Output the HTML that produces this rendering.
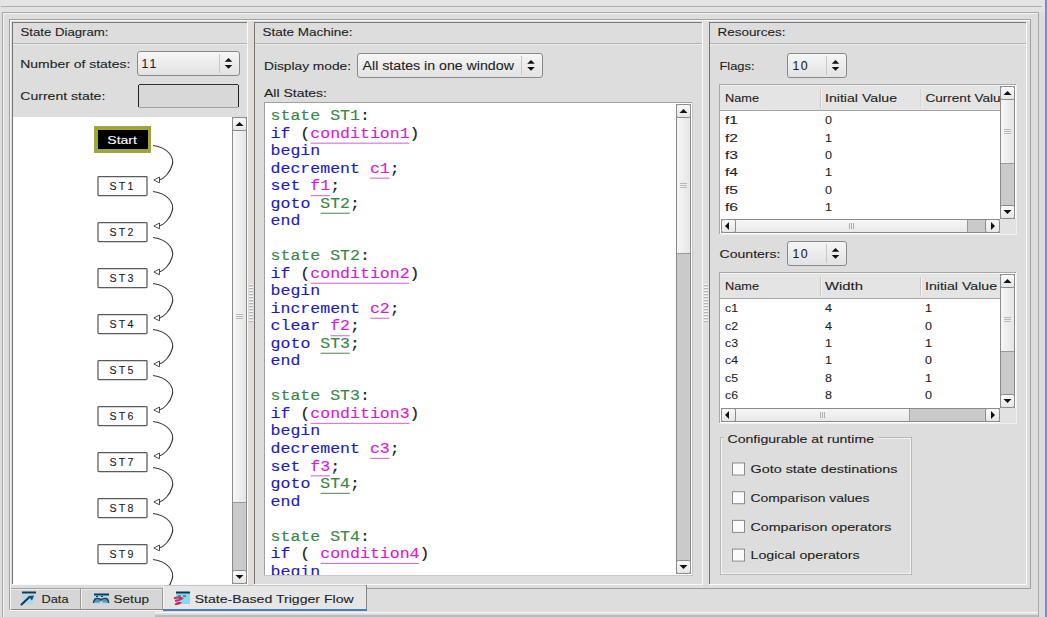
<!DOCTYPE html>
<html><head><meta charset="utf-8"><title>State-Based Trigger Flow</title>
<style>html,body{margin:0;padding:0;background:#dddddd;overflow:hidden;width:1047px;height:617px}svg{display:block}text{white-space:pre}</style>
</head><body><svg width="1047" height="617" viewBox="0 0 1047 617"><defs><linearGradient id="bg" x1="0" y1="0" x2="0" y2="1"><stop offset="0" stop-color="#fafafa"/><stop offset="1" stop-color="#e6e6e6"/></linearGradient><linearGradient id="tg" x1="0" y1="0" x2="0" y2="1"><stop offset="0" stop-color="#f6f6f6"/><stop offset="1" stop-color="#e8e8e8"/></linearGradient><linearGradient id="tgv" x1="0" y1="0" x2="1" y2="0"><stop offset="0" stop-color="#f6f6f6"/><stop offset="1" stop-color="#e6e6e6"/></linearGradient><linearGradient id="sg" x1="0" y1="0" x2="0" y2="1"><stop offset="0" stop-color="#f6f6f6"/><stop offset="1" stop-color="#e2e2e2"/></linearGradient></defs><rect x="0" y="0" width="1047" height="617" fill="#dddddd" /><rect x="0" y="0" width="1047" height="6" fill="#e4e4e4" /><rect x="1" y="6" width="1041" height="1" fill="#b0b0b0" /><rect x="0" y="7" width="1047" height="5" fill="#e2e2e2" /><rect x="2" y="12" width="1037" height="1" fill="#a8a8a8" /><rect x="2" y="12" width="1" height="606" fill="#a8a8a8" /><rect x="3" y="13" width="1035" height="1" fill="#f4f4f4" /><rect x="3" y="13" width="1" height="605" fill="#f4f4f4" /><rect x="1038" y="12" width="1" height="606" fill="#a8a8a8" /><rect x="1045" y="0" width="2" height="617" fill="#6494d6" /><rect x="9" y="19" width="1022" height="1" fill="#a0a0a0" /><rect x="9" y="19" width="1" height="570" fill="#a0a0a0" /><rect x="10" y="20" width="1020" height="1" fill="#f8f8f8" /><rect x="10" y="20" width="1" height="568" fill="#f8f8f8" /><rect x="1030" y="19" width="1" height="570" fill="#a0a0a0" /><rect x="9" y="588" width="1022" height="1" fill="#a0a0a0" /><rect x="12" y="22" width="236" height="1" fill="#7c7c7c" /><rect x="12" y="22" width="1" height="563" fill="#747474" /><rect x="247" y="22" width="1" height="563" fill="#fafafa" /><rect x="12" y="584" width="236" height="1" fill="#fafafa" /><rect x="13" y="43" width="234" height="1" fill="#b4b4b4" /><rect x="13" y="44" width="234" height="1" fill="#ececec" /><rect x="254" y="22" width="449" height="1" fill="#7c7c7c" /><rect x="254" y="22" width="1" height="563" fill="#747474" /><rect x="702" y="22" width="1" height="563" fill="#fafafa" /><rect x="254" y="584" width="449" height="1" fill="#fafafa" /><rect x="255" y="43" width="447" height="1" fill="#b4b4b4" /><rect x="255" y="44" width="447" height="1" fill="#ececec" /><rect x="709" y="22" width="318" height="1" fill="#7c7c7c" /><rect x="709" y="22" width="1" height="563" fill="#747474" /><rect x="1026" y="22" width="1" height="563" fill="#fafafa" /><rect x="709" y="584" width="318" height="1" fill="#fafafa" /><rect x="710" y="43" width="316" height="1" fill="#b4b4b4" /><rect x="710" y="44" width="316" height="1" fill="#ececec" /><rect x="248" y="22" width="6" height="563" fill="#e0dcd9" /><rect x="703" y="22" width="6" height="563" fill="#dfdfdf" /><rect x="249" y="284" width="4" height="1" fill="#f6f6f6" /><rect x="249" y="285" width="4" height="1" fill="#b4b4b4" /><rect x="704" y="284" width="4" height="1" fill="#f6f6f6" /><rect x="704" y="285" width="4" height="1" fill="#b4b4b4" /><rect x="249" y="287" width="4" height="1" fill="#f6f6f6" /><rect x="249" y="288" width="4" height="1" fill="#b4b4b4" /><rect x="704" y="287" width="4" height="1" fill="#f6f6f6" /><rect x="704" y="288" width="4" height="1" fill="#b4b4b4" /><rect x="249" y="290" width="4" height="1" fill="#f6f6f6" /><rect x="249" y="291" width="4" height="1" fill="#b4b4b4" /><rect x="704" y="290" width="4" height="1" fill="#f6f6f6" /><rect x="704" y="291" width="4" height="1" fill="#b4b4b4" /><rect x="249" y="293" width="4" height="1" fill="#f6f6f6" /><rect x="249" y="294" width="4" height="1" fill="#b4b4b4" /><rect x="704" y="293" width="4" height="1" fill="#f6f6f6" /><rect x="704" y="294" width="4" height="1" fill="#b4b4b4" /><rect x="249" y="296" width="4" height="1" fill="#f6f6f6" /><rect x="249" y="297" width="4" height="1" fill="#b4b4b4" /><rect x="704" y="296" width="4" height="1" fill="#f6f6f6" /><rect x="704" y="297" width="4" height="1" fill="#b4b4b4" /><rect x="249" y="299" width="4" height="1" fill="#f6f6f6" /><rect x="249" y="300" width="4" height="1" fill="#b4b4b4" /><rect x="704" y="299" width="4" height="1" fill="#f6f6f6" /><rect x="704" y="300" width="4" height="1" fill="#b4b4b4" /><rect x="249" y="302" width="4" height="1" fill="#f6f6f6" /><rect x="249" y="303" width="4" height="1" fill="#b4b4b4" /><rect x="704" y="302" width="4" height="1" fill="#f6f6f6" /><rect x="704" y="303" width="4" height="1" fill="#b4b4b4" /><rect x="249" y="305" width="4" height="1" fill="#f6f6f6" /><rect x="249" y="306" width="4" height="1" fill="#b4b4b4" /><rect x="704" y="305" width="4" height="1" fill="#f6f6f6" /><rect x="704" y="306" width="4" height="1" fill="#b4b4b4" /><rect x="249" y="308" width="4" height="1" fill="#f6f6f6" /><rect x="249" y="309" width="4" height="1" fill="#b4b4b4" /><rect x="704" y="308" width="4" height="1" fill="#f6f6f6" /><rect x="704" y="309" width="4" height="1" fill="#b4b4b4" /><rect x="249" y="311" width="4" height="1" fill="#f6f6f6" /><rect x="249" y="312" width="4" height="1" fill="#b4b4b4" /><rect x="704" y="311" width="4" height="1" fill="#f6f6f6" /><rect x="704" y="312" width="4" height="1" fill="#b4b4b4" /><rect x="249" y="314" width="4" height="1" fill="#f6f6f6" /><rect x="249" y="315" width="4" height="1" fill="#b4b4b4" /><rect x="704" y="314" width="4" height="1" fill="#f6f6f6" /><rect x="704" y="315" width="4" height="1" fill="#b4b4b4" /><rect x="249" y="317" width="4" height="1" fill="#f6f6f6" /><rect x="249" y="318" width="4" height="1" fill="#b4b4b4" /><rect x="704" y="317" width="4" height="1" fill="#f6f6f6" /><rect x="704" y="318" width="4" height="1" fill="#b4b4b4" /><rect x="249" y="320" width="4" height="1" fill="#f6f6f6" /><rect x="249" y="321" width="4" height="1" fill="#b4b4b4" /><rect x="704" y="320" width="4" height="1" fill="#f6f6f6" /><rect x="704" y="321" width="4" height="1" fill="#b4b4b4" /><text x="20.5" y="36.4" font-family="Liberation Sans" font-size="11" fill="#1e1e1e" stroke="#1e1e1e" stroke-width="0.1" textLength="88" lengthAdjust="spacingAndGlyphs" >State Diagram:</text><text x="262.5" y="36.4" font-family="Liberation Sans" font-size="11" fill="#1e1e1e" stroke="#1e1e1e" stroke-width="0.1" textLength="90" lengthAdjust="spacingAndGlyphs" >State Machine:</text><text x="717.5" y="36.4" font-family="Liberation Sans" font-size="11" fill="#1e1e1e" stroke="#1e1e1e" stroke-width="0.1" textLength="68" lengthAdjust="spacingAndGlyphs" >Resources:</text><text x="20.3" y="67.8" font-family="Liberation Sans" font-size="11" fill="#1e1e1e" stroke="#1e1e1e" stroke-width="0.1" textLength="110" lengthAdjust="spacingAndGlyphs" >Number of states:</text><rect x="137.5" y="51.5" width="102" height="24" rx="2.5" fill="url(#sg)" stroke="#8a8a8a"/><rect x="219" y="54" width="1" height="19" fill="#c8c8c8" /><path d="M224.7,61.8 L228.5,58 L232.3,61.8 Z M224.7,65 L228.5,68.8 L232.3,65 Z" fill="#111"/><text x="141.6" y="67.9" font-family="Liberation Sans" font-size="12.3" fill="#1e1e1e" stroke="#1e1e1e" stroke-width="0.1" textLength="14.8" lengthAdjust="spacing" >11</text><text x="20.3" y="99.8" font-family="Liberation Sans" font-size="11" fill="#1e1e1e" stroke="#1e1e1e" stroke-width="0.1" textLength="85" lengthAdjust="spacingAndGlyphs" >Current state:</text><rect x="138" y="84" width="101" height="24" fill="#d8d8d8" /><rect x="139" y="84" width="99" height="1" fill="#303030" /><rect x="138" y="85" width="1" height="22" fill="#202020" /><rect x="238" y="85" width="1" height="22" fill="#202020" /><rect x="139" y="107" width="99" height="1" fill="#a0a0a0" /><rect x="13" y="117" width="219" height="467" fill="#ffffff" /><rect x="232" y="117" width="15" height="467" fill="#cacaca" /><rect x="232" y="117" width="1" height="467" fill="#8a8a8a" /><rect x="246" y="117" width="1" height="467" fill="#8a8a8a" /><rect x="232.5" y="117.5" width="14" height="13" rx="2" fill="url(#bg)" stroke="#8a8a8a"/><path d="M235.5,126 L239.5,122 L243.5,126 Z" fill="#111"/><rect x="233" y="131" width="13" height="371" fill="url(#tgv)" /><rect x="233" y="502" width="13" height="1" fill="#9a9a9a" /><rect x="236" y="314" width="7" height="1" fill="#b8b8b8" /><rect x="236" y="316" width="7" height="1" fill="#b8b8b8" /><rect x="236" y="318" width="7" height="1" fill="#b8b8b8" /><rect x="232.5" y="570.5" width="14" height="13" rx="2" fill="url(#bg)" stroke="#8a8a8a"/><path d="M235.5,575 L239.5,579 L243.5,575 Z" fill="#111"/><rect x="94" y="126" width="57" height="27" fill="#a0a43c"/><rect x="98" y="130" width="50" height="19" fill="#000000" /><text x="107.3" y="144.2" font-family="Liberation Sans" font-size="11" fill="#ffffff" stroke="#ffffff" stroke-width="0.1" textLength="29.6" lengthAdjust="spacingAndGlyphs" >Start</text><rect x="98" y="176.5" width="49" height="19" rx="0.8" fill="#fff" stroke="#5a5a5a" stroke-width="1.25"/><text x="109.6" y="190.1" font-family="Liberation Sans" font-size="10.6" fill="#1a1a1a" stroke="#1a1a1a" stroke-width="0.1" textLength="23.8" lengthAdjust="spacing">ST1</text><rect x="98" y="222.5" width="49" height="19" rx="0.8" fill="#fff" stroke="#5a5a5a" stroke-width="1.25"/><text x="109.6" y="236.1" font-family="Liberation Sans" font-size="10.6" fill="#1a1a1a" stroke="#1a1a1a" stroke-width="0.1" textLength="23.8" lengthAdjust="spacing">ST2</text><rect x="98" y="268.5" width="49" height="19" rx="0.8" fill="#fff" stroke="#5a5a5a" stroke-width="1.25"/><text x="109.6" y="282.1" font-family="Liberation Sans" font-size="10.6" fill="#1a1a1a" stroke="#1a1a1a" stroke-width="0.1" textLength="23.8" lengthAdjust="spacing">ST3</text><rect x="98" y="314.5" width="49" height="19" rx="0.8" fill="#fff" stroke="#5a5a5a" stroke-width="1.25"/><text x="109.6" y="328.1" font-family="Liberation Sans" font-size="10.6" fill="#1a1a1a" stroke="#1a1a1a" stroke-width="0.1" textLength="23.8" lengthAdjust="spacing">ST4</text><rect x="98" y="360.5" width="49" height="19" rx="0.8" fill="#fff" stroke="#5a5a5a" stroke-width="1.25"/><text x="109.6" y="374.1" font-family="Liberation Sans" font-size="10.6" fill="#1a1a1a" stroke="#1a1a1a" stroke-width="0.1" textLength="23.8" lengthAdjust="spacing">ST5</text><rect x="98" y="406.5" width="49" height="19" rx="0.8" fill="#fff" stroke="#5a5a5a" stroke-width="1.25"/><text x="109.6" y="420.1" font-family="Liberation Sans" font-size="10.6" fill="#1a1a1a" stroke="#1a1a1a" stroke-width="0.1" textLength="23.8" lengthAdjust="spacing">ST6</text><rect x="98" y="452.5" width="49" height="19" rx="0.8" fill="#fff" stroke="#5a5a5a" stroke-width="1.25"/><text x="109.6" y="466.1" font-family="Liberation Sans" font-size="10.6" fill="#1a1a1a" stroke="#1a1a1a" stroke-width="0.1" textLength="23.8" lengthAdjust="spacing">ST7</text><rect x="98" y="498.5" width="49" height="19" rx="0.8" fill="#fff" stroke="#5a5a5a" stroke-width="1.25"/><text x="109.6" y="512.1" font-family="Liberation Sans" font-size="10.6" fill="#1a1a1a" stroke="#1a1a1a" stroke-width="0.1" textLength="23.8" lengthAdjust="spacing">ST8</text><rect x="98" y="544.5" width="49" height="19" rx="0.8" fill="#fff" stroke="#5a5a5a" stroke-width="1.25"/><text x="109.6" y="558.1" font-family="Liberation Sans" font-size="10.6" fill="#1a1a1a" stroke="#1a1a1a" stroke-width="0.1" textLength="23.8" lengthAdjust="spacing">ST9</text><path d="M153,145.5 C168,147.5 175,157.5 172,165.5 C170,172.5 164,179.0 159,180.0" fill="none" stroke="#3a3a3a" stroke-width="1.1"/><path d="M153.8,180.0 L159.5,177.0 L159.5,182.8 Z" fill="#fff" stroke="#3a3a3a" stroke-width="0.9"/><path d="M153,191.5 C168,193.5 175,203.5 172,211.5 C170,218.5 164,225.0 159,226.0" fill="none" stroke="#3a3a3a" stroke-width="1.1"/><path d="M153.8,226.0 L159.5,223.0 L159.5,228.8 Z" fill="#fff" stroke="#3a3a3a" stroke-width="0.9"/><path d="M153,237.5 C168,239.5 175,249.5 172,257.5 C170,264.5 164,271.0 159,272.0" fill="none" stroke="#3a3a3a" stroke-width="1.1"/><path d="M153.8,272.0 L159.5,269.0 L159.5,274.8 Z" fill="#fff" stroke="#3a3a3a" stroke-width="0.9"/><path d="M153,283.5 C168,285.5 175,295.5 172,303.5 C170,310.5 164,317.0 159,318.0" fill="none" stroke="#3a3a3a" stroke-width="1.1"/><path d="M153.8,318.0 L159.5,315.0 L159.5,320.8 Z" fill="#fff" stroke="#3a3a3a" stroke-width="0.9"/><path d="M153,329.5 C168,331.5 175,341.5 172,349.5 C170,356.5 164,363.0 159,364.0" fill="none" stroke="#3a3a3a" stroke-width="1.1"/><path d="M153.8,364.0 L159.5,361.0 L159.5,366.8 Z" fill="#fff" stroke="#3a3a3a" stroke-width="0.9"/><path d="M153,375.5 C168,377.5 175,387.5 172,395.5 C170,402.5 164,409.0 159,410.0" fill="none" stroke="#3a3a3a" stroke-width="1.1"/><path d="M153.8,410.0 L159.5,407.0 L159.5,412.8 Z" fill="#fff" stroke="#3a3a3a" stroke-width="0.9"/><path d="M153,421.5 C168,423.5 175,433.5 172,441.5 C170,448.5 164,455.0 159,456.0" fill="none" stroke="#3a3a3a" stroke-width="1.1"/><path d="M153.8,456.0 L159.5,453.0 L159.5,458.8 Z" fill="#fff" stroke="#3a3a3a" stroke-width="0.9"/><path d="M153,467.5 C168,469.5 175,479.5 172,487.5 C170,494.5 164,501.0 159,502.0" fill="none" stroke="#3a3a3a" stroke-width="1.1"/><path d="M153.8,502.0 L159.5,499.0 L159.5,504.8 Z" fill="#fff" stroke="#3a3a3a" stroke-width="0.9"/><path d="M153,513.5 C168,515.5 175,525.5 172,533.5 C170,540.5 164,547.0 159,548.0" fill="none" stroke="#3a3a3a" stroke-width="1.1"/><path d="M153.8,548.0 L159.5,545.0 L159.5,550.8 Z" fill="#fff" stroke="#3a3a3a" stroke-width="0.9"/><path d="M153,559.5 C168,561.5 175,571.5 172,579.5 C170,586.5 164,593.0 159,594.0" fill="none" stroke="#3a3a3a" stroke-width="1.1"/><path d="M153.8,594.0 L159.5,591.0 L159.5,596.8 Z" fill="#fff" stroke="#3a3a3a" stroke-width="0.9"/><text x="264" y="69.9" font-family="Liberation Sans" font-size="11" fill="#1e1e1e" stroke="#1e1e1e" stroke-width="0.1" textLength="87" lengthAdjust="spacingAndGlyphs" >Display mode:</text><rect x="357.5" y="53.5" width="185" height="24" rx="2.5" fill="url(#sg)" stroke="#8a8a8a"/><rect x="521" y="56" width="1" height="19" fill="#c8c8c8" /><path d="M527.2,63.8 L531.0,60 L534.8,63.8 Z M527.2,67 L531.0,70.8 L534.8,67 Z" fill="#111"/><text x="362.6" y="69.5" font-family="Liberation Sans" font-size="12.3" fill="#1e1e1e" stroke="#1e1e1e" stroke-width="0.1" textLength="151.3" lengthAdjust="spacingAndGlyphs" >All states in one window</text><text x="264" y="96.6" font-family="Liberation Sans" font-size="11" fill="#1e1e1e" stroke="#1e1e1e" stroke-width="0.1" textLength="63" lengthAdjust="spacingAndGlyphs" >All States:</text><rect x="265" y="103" width="427" height="472" fill="#ffffff" /><rect x="264" y="102" width="429" height="1" fill="#a0a0a0" /><rect x="264" y="102" width="1" height="474" fill="#a0a0a0" /><rect x="692" y="102" width="1" height="474" fill="#c8c8c8" /><rect x="264" y="575" width="429" height="1" fill="#c8c8c8" /><rect x="676" y="104" width="15" height="470" fill="#cacaca" /><rect x="676" y="104" width="1" height="470" fill="#8a8a8a" /><rect x="690" y="104" width="1" height="470" fill="#8a8a8a" /><rect x="676.5" y="104.5" width="14" height="13" rx="2" fill="url(#bg)" stroke="#8a8a8a"/><path d="M679.5,113 L683.5,109 L687.5,113 Z" fill="#111"/><rect x="677" y="118" width="13" height="135" fill="url(#tgv)" /><rect x="677" y="253" width="13" height="1" fill="#9a9a9a" /><rect x="680" y="183" width="7" height="1" fill="#b8b8b8" /><rect x="680" y="185" width="7" height="1" fill="#b8b8b8" /><rect x="680" y="187" width="7" height="1" fill="#b8b8b8" /><rect x="676.5" y="560.5" width="14" height="13" rx="2" fill="url(#bg)" stroke="#8a8a8a"/><path d="M679.5,565 L683.5,569 L687.5,565 Z" fill="#111"/><text transform="matrix(1,0,0,0.915,0,120.30)" x="270.60" y="0" font-family="Liberation Mono" font-size="16" fill="#3a8646" stroke="#3a8646" stroke-width="0.15" textLength="89.37" lengthAdjust="spacingAndGlyphs" xml:space="preserve">state ST1</text><text transform="matrix(1,0,0,0.915,0,120.30)" x="359.97" y="0" font-family="Liberation Mono" font-size="16" fill="#222" stroke="#222" stroke-width="0.15" textLength="9.93" lengthAdjust="spacingAndGlyphs" xml:space="preserve">:</text><text transform="matrix(1,0,0,0.915,0,137.81)" x="270.60" y="0" font-family="Liberation Mono" font-size="16" fill="#1a1ac4" stroke="#1a1ac4" stroke-width="0.15" textLength="19.86" lengthAdjust="spacingAndGlyphs" xml:space="preserve">if</text><text transform="matrix(1,0,0,0.915,0,137.81)" x="290.46" y="0" font-family="Liberation Mono" font-size="16" fill="#222" stroke="#222" stroke-width="0.15" textLength="19.86" lengthAdjust="spacingAndGlyphs" xml:space="preserve"> (</text><text transform="matrix(1,0,0,0.915,0,137.81)" x="310.32" y="0" font-family="Liberation Mono" font-size="16" fill="#d81ad4" stroke="#d81ad4" stroke-width="0.15" textLength="99.30" lengthAdjust="spacingAndGlyphs" xml:space="preserve">condition1</text><rect x="310.6" y="142.6" width="98.7" height="1.1" fill="#d070d0" /><text transform="matrix(1,0,0,0.915,0,137.81)" x="409.62" y="0" font-family="Liberation Mono" font-size="16" fill="#222" stroke="#222" stroke-width="0.15" textLength="9.93" lengthAdjust="spacingAndGlyphs" xml:space="preserve">)</text><text transform="matrix(1,0,0,0.915,0,155.32)" x="270.60" y="0" font-family="Liberation Mono" font-size="16" fill="#1a1ac4" stroke="#1a1ac4" stroke-width="0.15" textLength="49.65" lengthAdjust="spacingAndGlyphs" xml:space="preserve">begin</text><text transform="matrix(1,0,0,0.915,0,172.83)" x="270.60" y="0" font-family="Liberation Mono" font-size="16" fill="#1a1ac4" stroke="#1a1ac4" stroke-width="0.15" textLength="89.37" lengthAdjust="spacingAndGlyphs" xml:space="preserve">decrement</text><text transform="matrix(1,0,0,0.915,0,172.83)" x="359.97" y="0" font-family="Liberation Mono" font-size="16" fill="#222" stroke="#222" stroke-width="0.15" textLength="9.93" lengthAdjust="spacingAndGlyphs" xml:space="preserve"> </text><text transform="matrix(1,0,0,0.915,0,172.83)" x="369.90" y="0" font-family="Liberation Mono" font-size="16" fill="#d81ad4" stroke="#d81ad4" stroke-width="0.15" textLength="19.86" lengthAdjust="spacingAndGlyphs" xml:space="preserve">c1</text><rect x="370.2" y="177.6" width="19.3" height="1.1" fill="#d070d0" /><text transform="matrix(1,0,0,0.915,0,172.83)" x="389.76" y="0" font-family="Liberation Mono" font-size="16" fill="#222" stroke="#222" stroke-width="0.15" textLength="9.93" lengthAdjust="spacingAndGlyphs" xml:space="preserve">;</text><text transform="matrix(1,0,0,0.915,0,190.34)" x="270.60" y="0" font-family="Liberation Mono" font-size="16" fill="#1a1ac4" stroke="#1a1ac4" stroke-width="0.15" textLength="29.79" lengthAdjust="spacingAndGlyphs" xml:space="preserve">set</text><text transform="matrix(1,0,0,0.915,0,190.34)" x="300.39" y="0" font-family="Liberation Mono" font-size="16" fill="#222" stroke="#222" stroke-width="0.15" textLength="9.93" lengthAdjust="spacingAndGlyphs" xml:space="preserve"> </text><text transform="matrix(1,0,0,0.915,0,190.34)" x="310.32" y="0" font-family="Liberation Mono" font-size="16" fill="#d81ad4" stroke="#d81ad4" stroke-width="0.15" textLength="19.86" lengthAdjust="spacingAndGlyphs" xml:space="preserve">f1</text><rect x="310.6" y="195.1" width="19.3" height="1.1" fill="#d070d0" /><text transform="matrix(1,0,0,0.915,0,190.34)" x="330.18" y="0" font-family="Liberation Mono" font-size="16" fill="#222" stroke="#222" stroke-width="0.15" textLength="9.93" lengthAdjust="spacingAndGlyphs" xml:space="preserve">;</text><text transform="matrix(1,0,0,0.915,0,207.85)" x="270.60" y="0" font-family="Liberation Mono" font-size="16" fill="#1a1ac4" stroke="#1a1ac4" stroke-width="0.15" textLength="39.72" lengthAdjust="spacingAndGlyphs" xml:space="preserve">goto</text><text transform="matrix(1,0,0,0.915,0,207.85)" x="310.32" y="0" font-family="Liberation Mono" font-size="16" fill="#222" stroke="#222" stroke-width="0.15" textLength="9.93" lengthAdjust="spacingAndGlyphs" xml:space="preserve"> </text><text transform="matrix(1,0,0,0.915,0,207.85)" x="320.25" y="0" font-family="Liberation Mono" font-size="16" fill="#3a8646" stroke="#3a8646" stroke-width="0.15" textLength="29.79" lengthAdjust="spacingAndGlyphs" xml:space="preserve">ST2</text><rect x="320.6" y="212.7" width="29.2" height="1.1" fill="#5e8e62" /><text transform="matrix(1,0,0,0.915,0,207.85)" x="350.04" y="0" font-family="Liberation Mono" font-size="16" fill="#222" stroke="#222" stroke-width="0.15" textLength="9.93" lengthAdjust="spacingAndGlyphs" xml:space="preserve">;</text><text transform="matrix(1,0,0,0.915,0,225.36)" x="270.60" y="0" font-family="Liberation Mono" font-size="16" fill="#1a1ac4" stroke="#1a1ac4" stroke-width="0.15" textLength="29.79" lengthAdjust="spacingAndGlyphs" xml:space="preserve">end</text><text transform="matrix(1,0,0,0.915,0,260.38)" x="270.60" y="0" font-family="Liberation Mono" font-size="16" fill="#3a8646" stroke="#3a8646" stroke-width="0.15" textLength="89.37" lengthAdjust="spacingAndGlyphs" xml:space="preserve">state ST2</text><text transform="matrix(1,0,0,0.915,0,260.38)" x="359.97" y="0" font-family="Liberation Mono" font-size="16" fill="#222" stroke="#222" stroke-width="0.15" textLength="9.93" lengthAdjust="spacingAndGlyphs" xml:space="preserve">:</text><text transform="matrix(1,0,0,0.915,0,277.89)" x="270.60" y="0" font-family="Liberation Mono" font-size="16" fill="#1a1ac4" stroke="#1a1ac4" stroke-width="0.15" textLength="19.86" lengthAdjust="spacingAndGlyphs" xml:space="preserve">if</text><text transform="matrix(1,0,0,0.915,0,277.89)" x="290.46" y="0" font-family="Liberation Mono" font-size="16" fill="#222" stroke="#222" stroke-width="0.15" textLength="19.86" lengthAdjust="spacingAndGlyphs" xml:space="preserve"> (</text><text transform="matrix(1,0,0,0.915,0,277.89)" x="310.32" y="0" font-family="Liberation Mono" font-size="16" fill="#d81ad4" stroke="#d81ad4" stroke-width="0.15" textLength="99.30" lengthAdjust="spacingAndGlyphs" xml:space="preserve">condition2</text><rect x="310.6" y="282.7" width="98.7" height="1.1" fill="#d070d0" /><text transform="matrix(1,0,0,0.915,0,277.89)" x="409.62" y="0" font-family="Liberation Mono" font-size="16" fill="#222" stroke="#222" stroke-width="0.15" textLength="9.93" lengthAdjust="spacingAndGlyphs" xml:space="preserve">)</text><text transform="matrix(1,0,0,0.915,0,295.40)" x="270.60" y="0" font-family="Liberation Mono" font-size="16" fill="#1a1ac4" stroke="#1a1ac4" stroke-width="0.15" textLength="49.65" lengthAdjust="spacingAndGlyphs" xml:space="preserve">begin</text><text transform="matrix(1,0,0,0.915,0,312.91)" x="270.60" y="0" font-family="Liberation Mono" font-size="16" fill="#1a1ac4" stroke="#1a1ac4" stroke-width="0.15" textLength="89.37" lengthAdjust="spacingAndGlyphs" xml:space="preserve">increment</text><text transform="matrix(1,0,0,0.915,0,312.91)" x="359.97" y="0" font-family="Liberation Mono" font-size="16" fill="#222" stroke="#222" stroke-width="0.15" textLength="9.93" lengthAdjust="spacingAndGlyphs" xml:space="preserve"> </text><text transform="matrix(1,0,0,0.915,0,312.91)" x="369.90" y="0" font-family="Liberation Mono" font-size="16" fill="#d81ad4" stroke="#d81ad4" stroke-width="0.15" textLength="19.86" lengthAdjust="spacingAndGlyphs" xml:space="preserve">c2</text><rect x="370.2" y="317.7" width="19.3" height="1.1" fill="#d070d0" /><text transform="matrix(1,0,0,0.915,0,312.91)" x="389.76" y="0" font-family="Liberation Mono" font-size="16" fill="#222" stroke="#222" stroke-width="0.15" textLength="9.93" lengthAdjust="spacingAndGlyphs" xml:space="preserve">;</text><text transform="matrix(1,0,0,0.915,0,330.42)" x="270.60" y="0" font-family="Liberation Mono" font-size="16" fill="#1a1ac4" stroke="#1a1ac4" stroke-width="0.15" textLength="49.65" lengthAdjust="spacingAndGlyphs" xml:space="preserve">clear</text><text transform="matrix(1,0,0,0.915,0,330.42)" x="320.25" y="0" font-family="Liberation Mono" font-size="16" fill="#222" stroke="#222" stroke-width="0.15" textLength="9.93" lengthAdjust="spacingAndGlyphs" xml:space="preserve"> </text><text transform="matrix(1,0,0,0.915,0,330.42)" x="330.18" y="0" font-family="Liberation Mono" font-size="16" fill="#d81ad4" stroke="#d81ad4" stroke-width="0.15" textLength="19.86" lengthAdjust="spacingAndGlyphs" xml:space="preserve">f2</text><rect x="330.5" y="335.2" width="19.3" height="1.1" fill="#d070d0" /><text transform="matrix(1,0,0,0.915,0,330.42)" x="350.04" y="0" font-family="Liberation Mono" font-size="16" fill="#222" stroke="#222" stroke-width="0.15" textLength="9.93" lengthAdjust="spacingAndGlyphs" xml:space="preserve">;</text><text transform="matrix(1,0,0,0.915,0,347.93)" x="270.60" y="0" font-family="Liberation Mono" font-size="16" fill="#1a1ac4" stroke="#1a1ac4" stroke-width="0.15" textLength="39.72" lengthAdjust="spacingAndGlyphs" xml:space="preserve">goto</text><text transform="matrix(1,0,0,0.915,0,347.93)" x="310.32" y="0" font-family="Liberation Mono" font-size="16" fill="#222" stroke="#222" stroke-width="0.15" textLength="9.93" lengthAdjust="spacingAndGlyphs" xml:space="preserve"> </text><text transform="matrix(1,0,0,0.915,0,347.93)" x="320.25" y="0" font-family="Liberation Mono" font-size="16" fill="#3a8646" stroke="#3a8646" stroke-width="0.15" textLength="29.79" lengthAdjust="spacingAndGlyphs" xml:space="preserve">ST3</text><rect x="320.6" y="352.7" width="29.2" height="1.1" fill="#5e8e62" /><text transform="matrix(1,0,0,0.915,0,347.93)" x="350.04" y="0" font-family="Liberation Mono" font-size="16" fill="#222" stroke="#222" stroke-width="0.15" textLength="9.93" lengthAdjust="spacingAndGlyphs" xml:space="preserve">;</text><text transform="matrix(1,0,0,0.915,0,365.44)" x="270.60" y="0" font-family="Liberation Mono" font-size="16" fill="#1a1ac4" stroke="#1a1ac4" stroke-width="0.15" textLength="29.79" lengthAdjust="spacingAndGlyphs" xml:space="preserve">end</text><text transform="matrix(1,0,0,0.915,0,400.46)" x="270.60" y="0" font-family="Liberation Mono" font-size="16" fill="#3a8646" stroke="#3a8646" stroke-width="0.15" textLength="89.37" lengthAdjust="spacingAndGlyphs" xml:space="preserve">state ST3</text><text transform="matrix(1,0,0,0.915,0,400.46)" x="359.97" y="0" font-family="Liberation Mono" font-size="16" fill="#222" stroke="#222" stroke-width="0.15" textLength="9.93" lengthAdjust="spacingAndGlyphs" xml:space="preserve">:</text><text transform="matrix(1,0,0,0.915,0,417.97)" x="270.60" y="0" font-family="Liberation Mono" font-size="16" fill="#1a1ac4" stroke="#1a1ac4" stroke-width="0.15" textLength="19.86" lengthAdjust="spacingAndGlyphs" xml:space="preserve">if</text><text transform="matrix(1,0,0,0.915,0,417.97)" x="290.46" y="0" font-family="Liberation Mono" font-size="16" fill="#222" stroke="#222" stroke-width="0.15" textLength="19.86" lengthAdjust="spacingAndGlyphs" xml:space="preserve"> (</text><text transform="matrix(1,0,0,0.915,0,417.97)" x="310.32" y="0" font-family="Liberation Mono" font-size="16" fill="#d81ad4" stroke="#d81ad4" stroke-width="0.15" textLength="99.30" lengthAdjust="spacingAndGlyphs" xml:space="preserve">condition3</text><rect x="310.6" y="422.8" width="98.7" height="1.1" fill="#d070d0" /><text transform="matrix(1,0,0,0.915,0,417.97)" x="409.62" y="0" font-family="Liberation Mono" font-size="16" fill="#222" stroke="#222" stroke-width="0.15" textLength="9.93" lengthAdjust="spacingAndGlyphs" xml:space="preserve">)</text><text transform="matrix(1,0,0,0.915,0,435.48)" x="270.60" y="0" font-family="Liberation Mono" font-size="16" fill="#1a1ac4" stroke="#1a1ac4" stroke-width="0.15" textLength="49.65" lengthAdjust="spacingAndGlyphs" xml:space="preserve">begin</text><text transform="matrix(1,0,0,0.915,0,452.99)" x="270.60" y="0" font-family="Liberation Mono" font-size="16" fill="#1a1ac4" stroke="#1a1ac4" stroke-width="0.15" textLength="89.37" lengthAdjust="spacingAndGlyphs" xml:space="preserve">decrement</text><text transform="matrix(1,0,0,0.915,0,452.99)" x="359.97" y="0" font-family="Liberation Mono" font-size="16" fill="#222" stroke="#222" stroke-width="0.15" textLength="9.93" lengthAdjust="spacingAndGlyphs" xml:space="preserve"> </text><text transform="matrix(1,0,0,0.915,0,452.99)" x="369.90" y="0" font-family="Liberation Mono" font-size="16" fill="#d81ad4" stroke="#d81ad4" stroke-width="0.15" textLength="19.86" lengthAdjust="spacingAndGlyphs" xml:space="preserve">c3</text><rect x="370.2" y="457.8" width="19.3" height="1.1" fill="#d070d0" /><text transform="matrix(1,0,0,0.915,0,452.99)" x="389.76" y="0" font-family="Liberation Mono" font-size="16" fill="#222" stroke="#222" stroke-width="0.15" textLength="9.93" lengthAdjust="spacingAndGlyphs" xml:space="preserve">;</text><text transform="matrix(1,0,0,0.915,0,470.50)" x="270.60" y="0" font-family="Liberation Mono" font-size="16" fill="#1a1ac4" stroke="#1a1ac4" stroke-width="0.15" textLength="29.79" lengthAdjust="spacingAndGlyphs" xml:space="preserve">set</text><text transform="matrix(1,0,0,0.915,0,470.50)" x="300.39" y="0" font-family="Liberation Mono" font-size="16" fill="#222" stroke="#222" stroke-width="0.15" textLength="9.93" lengthAdjust="spacingAndGlyphs" xml:space="preserve"> </text><text transform="matrix(1,0,0,0.915,0,470.50)" x="310.32" y="0" font-family="Liberation Mono" font-size="16" fill="#d81ad4" stroke="#d81ad4" stroke-width="0.15" textLength="19.86" lengthAdjust="spacingAndGlyphs" xml:space="preserve">f3</text><rect x="310.6" y="475.3" width="19.3" height="1.1" fill="#d070d0" /><text transform="matrix(1,0,0,0.915,0,470.50)" x="330.18" y="0" font-family="Liberation Mono" font-size="16" fill="#222" stroke="#222" stroke-width="0.15" textLength="9.93" lengthAdjust="spacingAndGlyphs" xml:space="preserve">;</text><text transform="matrix(1,0,0,0.915,0,488.01)" x="270.60" y="0" font-family="Liberation Mono" font-size="16" fill="#1a1ac4" stroke="#1a1ac4" stroke-width="0.15" textLength="39.72" lengthAdjust="spacingAndGlyphs" xml:space="preserve">goto</text><text transform="matrix(1,0,0,0.915,0,488.01)" x="310.32" y="0" font-family="Liberation Mono" font-size="16" fill="#222" stroke="#222" stroke-width="0.15" textLength="9.93" lengthAdjust="spacingAndGlyphs" xml:space="preserve"> </text><text transform="matrix(1,0,0,0.915,0,488.01)" x="320.25" y="0" font-family="Liberation Mono" font-size="16" fill="#3a8646" stroke="#3a8646" stroke-width="0.15" textLength="29.79" lengthAdjust="spacingAndGlyphs" xml:space="preserve">ST4</text><rect x="320.6" y="492.8" width="29.2" height="1.1" fill="#5e8e62" /><text transform="matrix(1,0,0,0.915,0,488.01)" x="350.04" y="0" font-family="Liberation Mono" font-size="16" fill="#222" stroke="#222" stroke-width="0.15" textLength="9.93" lengthAdjust="spacingAndGlyphs" xml:space="preserve">;</text><text transform="matrix(1,0,0,0.915,0,505.52)" x="270.60" y="0" font-family="Liberation Mono" font-size="16" fill="#1a1ac4" stroke="#1a1ac4" stroke-width="0.15" textLength="29.79" lengthAdjust="spacingAndGlyphs" xml:space="preserve">end</text><text transform="matrix(1,0,0,0.915,0,540.54)" x="270.60" y="0" font-family="Liberation Mono" font-size="16" fill="#3a8646" stroke="#3a8646" stroke-width="0.15" textLength="89.37" lengthAdjust="spacingAndGlyphs" xml:space="preserve">state ST4</text><text transform="matrix(1,0,0,0.915,0,540.54)" x="359.97" y="0" font-family="Liberation Mono" font-size="16" fill="#222" stroke="#222" stroke-width="0.15" textLength="9.93" lengthAdjust="spacingAndGlyphs" xml:space="preserve">:</text><text transform="matrix(1,0,0,0.915,0,558.05)" x="270.60" y="0" font-family="Liberation Mono" font-size="16" fill="#1a1ac4" stroke="#1a1ac4" stroke-width="0.15" textLength="19.86" lengthAdjust="spacingAndGlyphs" xml:space="preserve">if</text><text transform="matrix(1,0,0,0.915,0,558.05)" x="290.46" y="0" font-family="Liberation Mono" font-size="16" fill="#222" stroke="#222" stroke-width="0.15" textLength="29.79" lengthAdjust="spacingAndGlyphs" xml:space="preserve"> ( </text><text transform="matrix(1,0,0,0.915,0,558.05)" x="320.25" y="0" font-family="Liberation Mono" font-size="16" fill="#d81ad4" stroke="#d81ad4" stroke-width="0.15" textLength="99.30" lengthAdjust="spacingAndGlyphs" xml:space="preserve">condition4</text><rect x="320.6" y="562.9" width="98.7" height="1.1" fill="#d070d0" /><text transform="matrix(1,0,0,0.915,0,558.05)" x="419.55" y="0" font-family="Liberation Mono" font-size="16" fill="#222" stroke="#222" stroke-width="0.15" textLength="9.93" lengthAdjust="spacingAndGlyphs" xml:space="preserve">)</text><text transform="matrix(1,0,0,0.915,0,575.56)" x="270.60" y="0" font-family="Liberation Mono" font-size="16" fill="#1a1ac4" stroke="#1a1ac4" stroke-width="0.15" textLength="49.65" lengthAdjust="spacingAndGlyphs" xml:space="preserve">begin</text><rect x="255" y="575" width="447" height="9" fill="#dddddd" /><rect x="264" y="575" width="429" height="1" fill="#c8c8c8" /><text x="719.5" y="69.5" font-family="Liberation Sans" font-size="11" fill="#1e1e1e" stroke="#1e1e1e" stroke-width="0.1" textLength="35" lengthAdjust="spacingAndGlyphs" >Flags:</text><rect x="787.5" y="53.5" width="59" height="24" rx="2.5" fill="url(#sg)" stroke="#8a8a8a"/><rect x="826" y="56" width="1" height="19" fill="#c8c8c8" /><path d="M831.7,63.8 L835.5,60 L839.3,63.8 Z M831.7,67 L835.5,70.8 L839.3,67 Z" fill="#111"/><text x="792.5" y="69.5" font-family="Liberation Sans" font-size="12.3" fill="#1e1e1e" stroke="#1e1e1e" stroke-width="0.1" textLength="15" lengthAdjust="spacing" >10</text><rect x="720" y="85" width="296" height="149" fill="#ffffff" /><rect x="720" y="85" width="280" height="25" fill="#e4e4e4" /><rect x="720" y="85" width="281" height="1" fill="#f2f2f2" /><rect x="719" y="84" width="298" height="1" fill="#a8a8a8" /><rect x="719" y="84" width="1" height="151" fill="#a8a8a8" /><rect x="1016" y="84" width="1" height="151" fill="#f0f0f0" /><rect x="719" y="234" width="298" height="1" fill="#f0f0f0" /><rect x="720" y="110" width="281" height="1" fill="#a8a8a8" /><rect x="820" y="89" width="1" height="19" fill="#c8c8c8" /><rect x="821" y="89" width="1" height="19" fill="#f4f4f4" /><rect x="920.5" y="89" width="1" height="19" fill="#c8c8c8" /><rect x="921.5" y="89" width="1" height="19" fill="#f4f4f4" /><text x="725" y="102.3" font-family="Liberation Sans" font-size="11" fill="#1e1e1e" stroke="#1e1e1e" stroke-width="0.1" textLength="34" lengthAdjust="spacingAndGlyphs" >Name</text><text x="825" y="102.3" font-family="Liberation Sans" font-size="11" fill="#1e1e1e" stroke="#1e1e1e" stroke-width="0.1" textLength="72" lengthAdjust="spacingAndGlyphs" >Initial Value</text><text x="925.5" y="102.3" font-family="Liberation Sans" font-size="11" fill="#1e1e1e" stroke="#1e1e1e" stroke-width="0.1" textLength="75" lengthAdjust="spacingAndGlyphs" >Current Valu</text><text x="725" y="124.2" font-family="Liberation Sans" font-size="11" fill="#1e1e1e" stroke="#1e1e1e" stroke-width="0.1" textLength="13" lengthAdjust="spacingAndGlyphs" >f1</text><text x="825" y="124.2" font-family="Liberation Sans" font-size="11" fill="#1e1e1e" stroke="#1e1e1e" stroke-width="0.1" textLength="7" lengthAdjust="spacingAndGlyphs" >0</text><text x="725" y="141.58" font-family="Liberation Sans" font-size="11" fill="#1e1e1e" stroke="#1e1e1e" stroke-width="0.1" textLength="13" lengthAdjust="spacingAndGlyphs" >f2</text><text x="825" y="141.58" font-family="Liberation Sans" font-size="11" fill="#1e1e1e" stroke="#1e1e1e" stroke-width="0.1" textLength="7" lengthAdjust="spacingAndGlyphs" >1</text><text x="725" y="158.96" font-family="Liberation Sans" font-size="11" fill="#1e1e1e" stroke="#1e1e1e" stroke-width="0.1" textLength="13" lengthAdjust="spacingAndGlyphs" >f3</text><text x="825" y="158.96" font-family="Liberation Sans" font-size="11" fill="#1e1e1e" stroke="#1e1e1e" stroke-width="0.1" textLength="7" lengthAdjust="spacingAndGlyphs" >0</text><text x="725" y="176.34" font-family="Liberation Sans" font-size="11" fill="#1e1e1e" stroke="#1e1e1e" stroke-width="0.1" textLength="13" lengthAdjust="spacingAndGlyphs" >f4</text><text x="825" y="176.34" font-family="Liberation Sans" font-size="11" fill="#1e1e1e" stroke="#1e1e1e" stroke-width="0.1" textLength="7" lengthAdjust="spacingAndGlyphs" >1</text><text x="725" y="193.72" font-family="Liberation Sans" font-size="11" fill="#1e1e1e" stroke="#1e1e1e" stroke-width="0.1" textLength="13" lengthAdjust="spacingAndGlyphs" >f5</text><text x="825" y="193.72" font-family="Liberation Sans" font-size="11" fill="#1e1e1e" stroke="#1e1e1e" stroke-width="0.1" textLength="7" lengthAdjust="spacingAndGlyphs" >0</text><text x="725" y="211.1" font-family="Liberation Sans" font-size="11" fill="#1e1e1e" stroke="#1e1e1e" stroke-width="0.1" textLength="13" lengthAdjust="spacingAndGlyphs" >f6</text><text x="825" y="211.1" font-family="Liberation Sans" font-size="11" fill="#1e1e1e" stroke="#1e1e1e" stroke-width="0.1" textLength="7" lengthAdjust="spacingAndGlyphs" >1</text><rect x="1000" y="86" width="15" height="133" fill="#cacaca" /><rect x="1000" y="86" width="1" height="133" fill="#8a8a8a" /><rect x="1014" y="86" width="1" height="133" fill="#8a8a8a" /><rect x="1000.5" y="86.5" width="14" height="13" rx="2" fill="url(#bg)" stroke="#8a8a8a"/><path d="M1003.5,95 L1007.5,91 L1011.5,95 Z" fill="#111"/><rect x="1001" y="100" width="13" height="63" fill="url(#tgv)" /><rect x="1001" y="163" width="13" height="1" fill="#9a9a9a" /><rect x="1004" y="129" width="7" height="1" fill="#b8b8b8" /><rect x="1004" y="131" width="7" height="1" fill="#b8b8b8" /><rect x="1004" y="133" width="7" height="1" fill="#b8b8b8" /><rect x="1000.5" y="205.5" width="14" height="13" rx="2" fill="url(#bg)" stroke="#8a8a8a"/><path d="M1003.5,210 L1007.5,214 L1011.5,210 Z" fill="#111"/><rect x="721" y="219" width="279" height="14" fill="#cacaca" /><rect x="721" y="219" width="279" height="1" fill="#8a8a8a" /><rect x="721" y="232" width="279" height="1" fill="#8a8a8a" /><rect x="721.5" y="219.5" width="14" height="13" rx="2" fill="url(#bg)" stroke="#8a8a8a"/><path d="M725,226 L729,222 L729,230 Z" fill="#111"/><rect x="736" y="220" width="231" height="12" fill="url(#tg)" /><rect x="967" y="220" width="1" height="12" fill="#9a9a9a" /><rect x="849" y="223" width="1" height="6" fill="#b0b0b0" /><rect x="851" y="223" width="1" height="6" fill="#b0b0b0" /><rect x="853" y="223" width="1" height="6" fill="#b0b0b0" /><rect x="1000" y="219" width="16" height="15" fill="#e2e2e2" /><rect x="985.5" y="219.5" width="14" height="13" rx="2" fill="url(#bg)" stroke="#8a8a8a"/><path d="M995,226 L991,222 L991,230 Z" fill="#111"/><text x="719.5" y="257.9" font-family="Liberation Sans" font-size="11" fill="#1e1e1e" stroke="#1e1e1e" stroke-width="0.1" textLength="61" lengthAdjust="spacingAndGlyphs" >Counters:</text><rect x="787.5" y="241.5" width="59" height="24" rx="2.5" fill="url(#sg)" stroke="#8a8a8a"/><rect x="826" y="244" width="1" height="19" fill="#c8c8c8" /><path d="M831.7,251.8 L835.5,248 L839.3,251.8 Z M831.7,255 L835.5,258.8 L839.3,255 Z" fill="#111"/><text x="792.5" y="257.5" font-family="Liberation Sans" font-size="12.3" fill="#1e1e1e" stroke="#1e1e1e" stroke-width="0.1" textLength="15" lengthAdjust="spacing" >10</text><rect x="720" y="273" width="296" height="150" fill="#ffffff" /><rect x="720" y="273" width="280" height="25" fill="#e4e4e4" /><rect x="720" y="273" width="281" height="1" fill="#f2f2f2" /><rect x="719" y="272" width="298" height="1" fill="#a8a8a8" /><rect x="719" y="272" width="1" height="152" fill="#a8a8a8" /><rect x="1016" y="272" width="1" height="152" fill="#f0f0f0" /><rect x="719" y="423" width="298" height="1" fill="#f0f0f0" /><rect x="720" y="298" width="281" height="1" fill="#a8a8a8" /><rect x="820" y="277" width="1" height="19" fill="#c8c8c8" /><rect x="821" y="277" width="1" height="19" fill="#f4f4f4" /><rect x="920" y="277" width="1" height="19" fill="#c8c8c8" /><rect x="921" y="277" width="1" height="19" fill="#f4f4f4" /><text x="725" y="290.3" font-family="Liberation Sans" font-size="11" fill="#1e1e1e" stroke="#1e1e1e" stroke-width="0.1" textLength="34" lengthAdjust="spacingAndGlyphs" >Name</text><text x="825" y="290.3" font-family="Liberation Sans" font-size="11" fill="#1e1e1e" stroke="#1e1e1e" stroke-width="0.1" textLength="38" lengthAdjust="spacingAndGlyphs" >Width</text><text x="925" y="290.3" font-family="Liberation Sans" font-size="11" fill="#1e1e1e" stroke="#1e1e1e" stroke-width="0.1" textLength="72" lengthAdjust="spacingAndGlyphs" >Initial Value</text><text x="725" y="312.2" font-family="Liberation Sans" font-size="11" fill="#1e1e1e" stroke="#1e1e1e" stroke-width="0.1" textLength="13" lengthAdjust="spacingAndGlyphs" >c1</text><text x="825" y="312.2" font-family="Liberation Sans" font-size="11" fill="#1e1e1e" stroke="#1e1e1e" stroke-width="0.1" textLength="7" lengthAdjust="spacingAndGlyphs" >4</text><text x="925" y="312.2" font-family="Liberation Sans" font-size="11" fill="#1e1e1e" stroke="#1e1e1e" stroke-width="0.1" textLength="7" lengthAdjust="spacingAndGlyphs" >1</text><text x="725" y="329.58" font-family="Liberation Sans" font-size="11" fill="#1e1e1e" stroke="#1e1e1e" stroke-width="0.1" textLength="13" lengthAdjust="spacingAndGlyphs" >c2</text><text x="825" y="329.58" font-family="Liberation Sans" font-size="11" fill="#1e1e1e" stroke="#1e1e1e" stroke-width="0.1" textLength="7" lengthAdjust="spacingAndGlyphs" >4</text><text x="925" y="329.58" font-family="Liberation Sans" font-size="11" fill="#1e1e1e" stroke="#1e1e1e" stroke-width="0.1" textLength="7" lengthAdjust="spacingAndGlyphs" >0</text><text x="725" y="346.96" font-family="Liberation Sans" font-size="11" fill="#1e1e1e" stroke="#1e1e1e" stroke-width="0.1" textLength="13" lengthAdjust="spacingAndGlyphs" >c3</text><text x="825" y="346.96" font-family="Liberation Sans" font-size="11" fill="#1e1e1e" stroke="#1e1e1e" stroke-width="0.1" textLength="7" lengthAdjust="spacingAndGlyphs" >1</text><text x="925" y="346.96" font-family="Liberation Sans" font-size="11" fill="#1e1e1e" stroke="#1e1e1e" stroke-width="0.1" textLength="7" lengthAdjust="spacingAndGlyphs" >1</text><text x="725" y="364.34" font-family="Liberation Sans" font-size="11" fill="#1e1e1e" stroke="#1e1e1e" stroke-width="0.1" textLength="13" lengthAdjust="spacingAndGlyphs" >c4</text><text x="825" y="364.34" font-family="Liberation Sans" font-size="11" fill="#1e1e1e" stroke="#1e1e1e" stroke-width="0.1" textLength="7" lengthAdjust="spacingAndGlyphs" >1</text><text x="925" y="364.34" font-family="Liberation Sans" font-size="11" fill="#1e1e1e" stroke="#1e1e1e" stroke-width="0.1" textLength="7" lengthAdjust="spacingAndGlyphs" >0</text><text x="725" y="381.71999999999997" font-family="Liberation Sans" font-size="11" fill="#1e1e1e" stroke="#1e1e1e" stroke-width="0.1" textLength="13" lengthAdjust="spacingAndGlyphs" >c5</text><text x="825" y="381.71999999999997" font-family="Liberation Sans" font-size="11" fill="#1e1e1e" stroke="#1e1e1e" stroke-width="0.1" textLength="7" lengthAdjust="spacingAndGlyphs" >8</text><text x="925" y="381.71999999999997" font-family="Liberation Sans" font-size="11" fill="#1e1e1e" stroke="#1e1e1e" stroke-width="0.1" textLength="7" lengthAdjust="spacingAndGlyphs" >1</text><text x="725" y="399.09999999999997" font-family="Liberation Sans" font-size="11" fill="#1e1e1e" stroke="#1e1e1e" stroke-width="0.1" textLength="13" lengthAdjust="spacingAndGlyphs" >c6</text><text x="825" y="399.09999999999997" font-family="Liberation Sans" font-size="11" fill="#1e1e1e" stroke="#1e1e1e" stroke-width="0.1" textLength="7" lengthAdjust="spacingAndGlyphs" >8</text><text x="925" y="399.09999999999997" font-family="Liberation Sans" font-size="11" fill="#1e1e1e" stroke="#1e1e1e" stroke-width="0.1" textLength="7" lengthAdjust="spacingAndGlyphs" >0</text><rect x="1000" y="274" width="15" height="134" fill="#cacaca" /><rect x="1000" y="274" width="1" height="134" fill="#8a8a8a" /><rect x="1014" y="274" width="1" height="134" fill="#8a8a8a" /><rect x="1000.5" y="274.5" width="14" height="13" rx="2" fill="url(#bg)" stroke="#8a8a8a"/><path d="M1003.5,283 L1007.5,279 L1011.5,283 Z" fill="#111"/><rect x="1001" y="288" width="13" height="63" fill="url(#tgv)" /><rect x="1001" y="351" width="13" height="1" fill="#9a9a9a" /><rect x="1004" y="317" width="7" height="1" fill="#b8b8b8" /><rect x="1004" y="319" width="7" height="1" fill="#b8b8b8" /><rect x="1004" y="321" width="7" height="1" fill="#b8b8b8" /><rect x="1000.5" y="394.5" width="14" height="13" rx="2" fill="url(#bg)" stroke="#8a8a8a"/><path d="M1003.5,399 L1007.5,403 L1011.5,399 Z" fill="#111"/><rect x="721" y="408" width="279" height="14" fill="#cacaca" /><rect x="721" y="408" width="279" height="1" fill="#8a8a8a" /><rect x="721" y="421" width="279" height="1" fill="#8a8a8a" /><rect x="721.5" y="408.5" width="14" height="13" rx="2" fill="url(#bg)" stroke="#8a8a8a"/><path d="M725,415 L729,411 L729,419 Z" fill="#111"/><rect x="736" y="409" width="173" height="12" fill="url(#tg)" /><rect x="909" y="409" width="1" height="12" fill="#9a9a9a" /><rect x="820" y="412" width="1" height="6" fill="#b0b0b0" /><rect x="822" y="412" width="1" height="6" fill="#b0b0b0" /><rect x="824" y="412" width="1" height="6" fill="#b0b0b0" /><rect x="1000" y="408" width="16" height="15" fill="#e2e2e2" /><rect x="985.5" y="408.5" width="14" height="13" rx="2" fill="url(#bg)" stroke="#8a8a8a"/><path d="M995,415 L991,411 L991,419 Z" fill="#111"/><rect x="720.5" y="437.5" width="191" height="137" fill="none" stroke="#b8b8b8"/><rect x="721.5" y="438.5" width="189" height="135" fill="none" stroke="#f2f2f2"/><rect x="724" y="430" width="154" height="12" fill="#dddddd" /><text x="727.5" y="442.8" font-family="Liberation Sans" font-size="11" fill="#1e1e1e" stroke="#1e1e1e" stroke-width="0.1" textLength="146.5" lengthAdjust="spacingAndGlyphs" >Configurable at runtime</text><rect x="732.5" y="463.0" width="12" height="12" fill="#fafafa" stroke="#8c8c8c"/><text x="750.5" y="473.1" font-family="Liberation Sans" font-size="11" fill="#1e1e1e" stroke="#1e1e1e" stroke-width="0.1" textLength="147" lengthAdjust="spacingAndGlyphs" >Goto state destinations</text><rect x="732.5" y="491.7" width="12" height="12" fill="#fafafa" stroke="#8c8c8c"/><text x="750.5" y="501.8" font-family="Liberation Sans" font-size="11" fill="#1e1e1e" stroke="#1e1e1e" stroke-width="0.1" textLength="119" lengthAdjust="spacingAndGlyphs" >Comparison values</text><rect x="732.5" y="520.4" width="12" height="12" fill="#fafafa" stroke="#8c8c8c"/><text x="750.5" y="530.5" font-family="Liberation Sans" font-size="11" fill="#1e1e1e" stroke="#1e1e1e" stroke-width="0.1" textLength="141" lengthAdjust="spacingAndGlyphs" >Comparison operators</text><rect x="732.5" y="549.1" width="12" height="12" fill="#fafafa" stroke="#8c8c8c"/><text x="750.5" y="559.2" font-family="Liberation Sans" font-size="11" fill="#1e1e1e" stroke="#1e1e1e" stroke-width="0.1" textLength="109" lengthAdjust="spacingAndGlyphs" >Logical operators</text><rect x="11" y="585" width="1019" height="3" fill="#dddddd" /><rect x="1031" y="585" width="6" height="3" fill="#dddddd" /><rect x="10" y="588" width="70" height="21" fill="#d6d6d6" /><rect x="10" y="588" width="71" height="1" fill="#a4a4a4" /><rect x="11" y="589" width="69" height="1" fill="#e8e8e8" /><rect x="10" y="589" width="1" height="21" fill="#f0f0f0" /><rect x="80" y="588" width="1" height="22" fill="#9a9a9a" /><rect x="10" y="609" width="71" height="1" fill="#8a8a8a" /><rect x="10" y="610" width="71" height="1" fill="#f4f4f4" /><text x="41.5" y="602.5" font-family="Liberation Sans" font-size="11" fill="#1e1e1e" stroke="#1e1e1e" stroke-width="0.1" textLength="27" lengthAdjust="spacingAndGlyphs" >Data</text><rect x="9" y="585" width="1" height="25" fill="#a0a0a0" /><rect x="10" y="588" width="1" height="22" fill="#f4f4f4" /><rect x="81" y="588" width="81" height="21" fill="#d6d6d6" /><rect x="81" y="588" width="82" height="1" fill="#a4a4a4" /><rect x="82" y="589" width="80" height="1" fill="#e8e8e8" /><rect x="81" y="589" width="1" height="21" fill="#f0f0f0" /><rect x="162" y="588" width="1" height="22" fill="#9a9a9a" /><rect x="81" y="609" width="82" height="1" fill="#8a8a8a" /><rect x="81" y="610" width="82" height="1" fill="#f4f4f4" /><text x="113.5" y="602.5" font-family="Liberation Sans" font-size="11" fill="#1e1e1e" stroke="#1e1e1e" stroke-width="0.1" textLength="35.5" lengthAdjust="spacingAndGlyphs" >Setup</text><rect x="367" y="589" width="671" height="23" fill="#dddddd" /><rect x="367" y="588" width="664" height="1" fill="#a0a0a0" /><rect x="1030" y="560" width="1" height="29" fill="#a0a0a0" /><rect x="163" y="585" width="203" height="26" fill="#e6e6e6" /><rect x="163" y="585" width="204" height="1" fill="#c4c4c4" /><rect x="163" y="585" width="1" height="26" fill="#f4f4f4" /><rect x="366" y="585" width="1" height="26" fill="#888888" /><rect x="163" y="609" width="204" height="2" fill="#4a7ac0" /><text x="194.7" y="602.5" font-family="Liberation Sans" font-size="11" fill="#1e1e1e" stroke="#1e1e1e" stroke-width="0.1" textLength="159" lengthAdjust="spacingAndGlyphs" >State-Based Trigger Flow</text><rect x="155" y="612" width="883" height="1" fill="#f8f8f8" /><rect x="155" y="615" width="883" height="2" fill="#bababa" /><g><path d="M22,595 L35,595 L33,604 L24,604 Z" fill="#a8dcf0" opacity="0.9"/><rect x="22" y="591.5" width="14" height="2" fill="#0f3a5a"/><path d="M21.5,604.5 L29,597.5" stroke="#0f3a5a" stroke-width="2" stroke-linecap="round"/><path d="M28,596 L34,595.5 L32,600.5 Z" fill="#1f4a6a"/></g><g><rect x="94" y="594" width="15" height="10" fill="#a8daf0"/><rect x="94" y="593.5" width="15" height="2" fill="#0f3a5a"/><rect x="96" y="596" width="2" height="1" fill="#0f3a5a"/><rect x="101" y="596" width="2" height="1" fill="#0f3a5a"/><path d="M93.5,603 Q94,598.5 97.5,598.5 Q100,598.5 101,600 Q102,598.5 105,598.5 Q108.5,598.5 108.5,603" stroke="#1a3a5a" stroke-width="1.6" fill="none"/><rect x="95" y="599.5" width="5" height="3" fill="#3a5a7a" opacity="0.6"/><rect x="102.5" y="599.5" width="5" height="3" fill="#3a5a7a" opacity="0.6"/></g><g><rect x="176" y="592" width="14" height="12" fill="#8ad8ee"/><rect x="176" y="591.5" width="14" height="2" fill="#0a3a4a"/><rect x="178" y="595.5" width="3" height="1" fill="#1a3a6a"/><rect x="183" y="595.5" width="3" height="1" fill="#1a3a6a"/><rect x="179" y="597.5" width="3" height="1.2" fill="#1a3a6a"/><path d="M174,598.5 Q178,596.5 182,598.5 Q179,600.5 175,601" stroke="#d8285a" stroke-width="2" fill="none"/><path d="M174.5,604 Q178,601 182,602.5 Q179,605.5 175,605" fill="#c82050"/></g></svg></body></html>
